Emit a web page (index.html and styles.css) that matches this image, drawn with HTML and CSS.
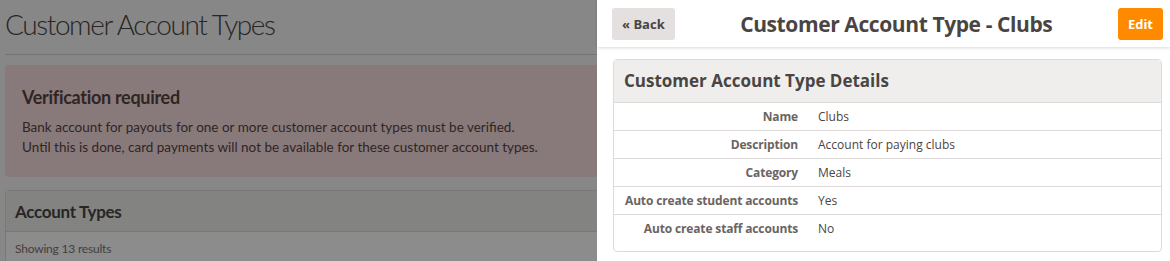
FILE: index.html
```html
<!DOCTYPE html>
<html lang="en">
<head>
    <meta charset="UTF-8">
    <meta name="viewport" content="width=device-width, initial-scale=1.0">
    <title>Customer Account Types</title>
    <link rel="stylesheet" href="styles.css">
</head>
<body>

    <div class="page">
        <h1 class="page-title">Customer Account Types</h1>

        <div class="alert">
            <h3>Verification required</h3>
            <p>Bank account for payouts for one or more customer account types must be verified.<br>
            Until this is done, card payments will not be available for these customer account types.</p>
        </div>

        <div class="card">
            <div class="card-header">Account Types</div>
            <div class="card-body">Showing 13 results</div>
        </div>
    </div>

    <div class="overlay"></div>

    <div class="side-panel">
        <div class="panel-header">
            <div class="button back">&laquo; Back</div>
            <h2 class="panel-title">Customer Account Type - Clubs</h2>
            <div class="button edit">Edit</div>
        </div>

        <div class="details">
            <div class="details-header">Customer Account Type Details</div>
            <table class="details-table">
                <tr><th>Name</th><td>Clubs</td></tr>
                <tr><th>Description</th><td>Account for paying clubs</td></tr>
                <tr><th>Category</th><td>Meals</td></tr>
                <tr><th>Auto create student accounts</th><td>Yes</td></tr>
                <tr><th>Auto create staff accounts</th><td>No</td></tr>
            </table>
        </div>
    </div>

</body>
</html>
```

FILE: styles.css
```css
body {
    margin: 0;
    height: 100vh;
    overflow: hidden;
    background-color: #f7f6f6;
    font-family: "Open Sans", sans-serif;
    color: #4a4543;
}

.page {
    padding: 0 5px;
    font-family: Lato, sans-serif;
}

.page-title {
    margin: 0;
    padding: 6px 0 12px;
    font-weight: 300;
    font-size: 28px;
    line-height: 36px;
    letter-spacing: -1.4px;
    border-bottom: 1px solid #d6d3d2;
}

.alert {
    margin-top: 10px;
    padding: 20px 17px;
    background-color: #f7dede;
    border-radius: 4px;
    color: #5a4442;
}

.alert h3 {
    margin: 0 0 8px;
    font-size: 18px;
    line-height: 24px;
    font-weight: 700;
    letter-spacing: -0.3px;
}

.alert p {
    margin: 0;
    font-size: 13.5px;
    line-height: 20px;
}

.card {
    margin-top: 13px;
    border: 1px solid #dddad9;
    border-radius: 4px;
    background-color: #fff;
}

.card-header {
    height: 40px;
    line-height: 42px;
    padding: 0 9px;
    background-color: #efeeed;
    border-bottom: 1px solid #dddad9;
    font-size: 17px;
    font-weight: 700;
    letter-spacing: -0.3px;
}

.card-body {
    padding: 9px 9px;
    font-size: 12px;
    letter-spacing: -0.2px;
    color: #7a7472;
}

.overlay {
    position: fixed;
    inset: 0;
    background-color: rgba(0, 0, 0, 0.45);
}

.side-panel {
    position: fixed;
    top: 0;
    bottom: 0;
    left: 597px;
    right: 0;
    background-color: #fff;
}

.panel-header {
    display: flex;
    align-items: center;
    justify-content: space-between;
    height: 47px;
    padding: 0 7px 0 15px;
    box-shadow: 0 1px 3px rgba(0, 0, 0, 0.15);
}

.panel-title {
    margin: 0;
    font-size: 21px;
    font-weight: 700;
    letter-spacing: -0.4px;
}

.button {
    height: 32px;
    line-height: 32px;
    padding: 0 10px;
    border-radius: 3px;
    font-size: 13px;
    font-weight: 700;
}

.button.back {
    background-color: #e3e0df;
    color: #4a4543;
}

.button.edit {
    background-color: #ff8a00;
    color: #fff;
}

.details {
    margin: 12px 8px 0 16px;
    border: 1px solid #dddad9;
    border-radius: 4px;
    padding-bottom: 9px;
}

.details-header {
    padding: 10px;
    height: 22px;
    line-height: 22px;
    background-color: #efeeed;
    border-bottom: 1px solid #dddad9;
    font-size: 17px;
    font-weight: 700;
}

.details-table {
    width: 100%;
    border-collapse: collapse;
    font-size: 12px;
}

.details-table th,
.details-table td {
    height: 27px;
    padding: 0 10px;
    border-top: 1px solid #dddad9;
    white-space: nowrap;
}

.details-table tr:first-child th,
.details-table tr:first-child td {
    border-top: none;
}

.details-table th {
    padding-left: 11px;
    text-align: right;
    color: #6b6462;
    font-weight: 700;
    letter-spacing: -0.15px;
}

.details-table td {
    width: 100%;
    color: #4a4543;
}
```
